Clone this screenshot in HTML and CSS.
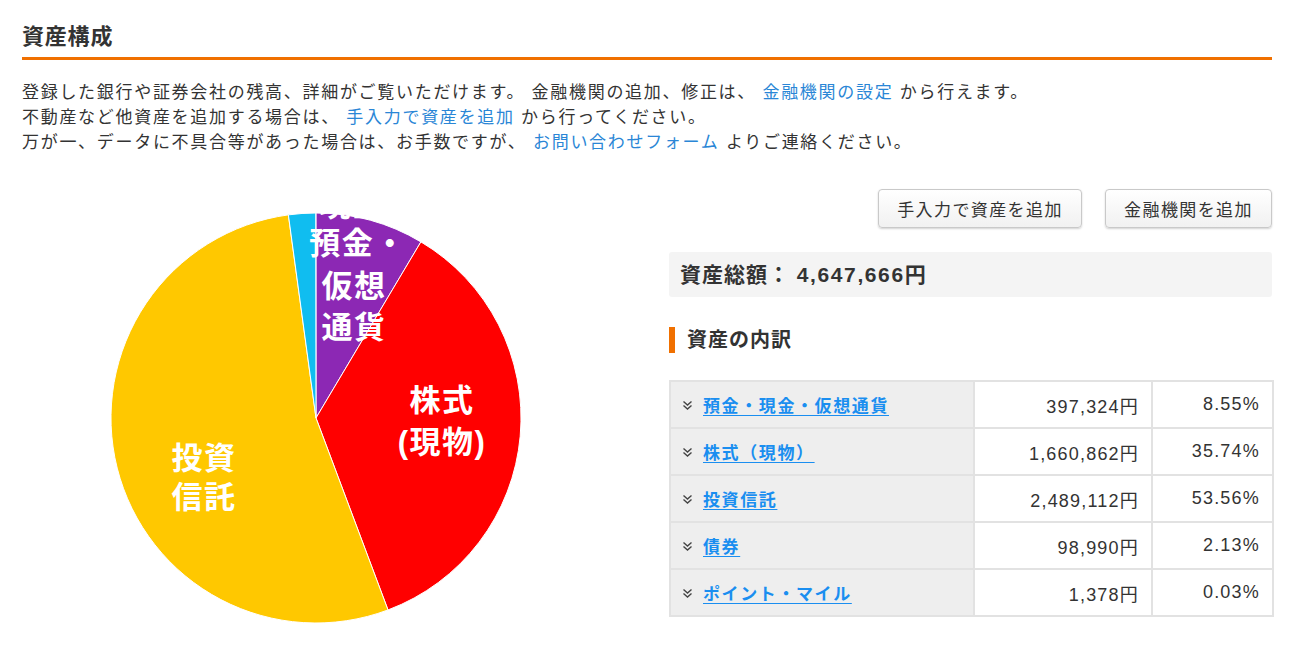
FILE: index.html
```html
<!DOCTYPE html>
<html lang="ja">
<head>
<meta charset="utf-8">
<title>資産構成</title>
<link rel="stylesheet" href="styles.css">
</head>
<body>
<div class="page">
  <h1 class="title">資産構成</h1>
  <div class="intro">
    <p>登録した銀行や証券会社の残高、詳細がご覧いただけます。 金融機関の追加、修正は、 <a href="#" class="plink">金融機関の設定</a> から行えます。</p>
    <p>不動産など他資産を追加する場合は、 <a href="#" class="plink">手入力で資産を追加</a> から行ってください。</p>
    <p>万が一、データに不具合等があった場合は、お手数ですが、 <a href="#" class="plink">お問い合わせフォーム</a> よりご連絡ください。</p>
  </div>

  <div class="main">
    <div class="chart-col">
      <svg class="pie" width="630" height="420" viewBox="0 0 630 420">
        <g stroke="#ffffff" stroke-width="1" stroke-linejoin="round">
          <path fill="#8c28b4" d="M294 206 L294 1 A205 205 0 0 1 398.92 29.88 Z"/>
          <path fill="#ff0000" d="M294 206 L398.92 29.88 A205 205 0 0 1 366 397.94 Z"/>
          <path fill="#ffc800" d="M294 206 L366 397.94 A205 205 0 1 1 266.39 2.87 Z"/>
          <path fill="#10bdf0" d="M294 206 L266.39 2.87 A205 205 0 0 1 293.75 1 Z"/>
        </g>
        <g class="pie-label" text-anchor="middle" dominant-baseline="central">
          <text x="330" y="-7">現金</text>
          <text x="336" y="31">預金・</text>
          <text x="332" y="74">仮想</text>
          <text x="332" y="115">通貨</text>
          <text x="420" y="188">株式</text>
          <text x="420" y="230">(現物)</text>
          <text x="182" y="246">投資</text>
          <text x="182" y="285">信託</text>
        </g>
      </svg>
    </div>

    <div class="side-col">
      <div class="buttons">
        <button class="btn">手入力で資産を追加</button>
        <button class="btn">金融機関を追加</button>
      </div>
      <div class="total">資産総額： <span class="total-num">4,647,666</span>円</div>
      <h2 class="subhead">資産の内訳</h2>
      <table class="breakdown">
        <colgroup>
          <col class="c1"><col class="c2"><col class="c3">
        </colgroup>
        <tbody>
          <tr>
            <td class="name"><span class="chev"><svg width="11" height="11" viewBox="0 0 11 11"><path d="M1.5 1.5 L5.5 5 L9.5 1.5 M1.5 5.5 L5.5 9 L9.5 5.5" fill="none" stroke="#444" stroke-width="1.4"/></svg></span><a href="#" class="tlink">預金・現金・仮想通貨</a></td>
            <td class="num">397,324円</td>
            <td class="num">8.55%</td>
          </tr>
          <tr>
            <td class="name"><span class="chev"><svg width="11" height="11" viewBox="0 0 11 11"><path d="M1.5 1.5 L5.5 5 L9.5 1.5 M1.5 5.5 L5.5 9 L9.5 5.5" fill="none" stroke="#444" stroke-width="1.4"/></svg></span><a href="#" class="tlink">株式（現物）</a></td>
            <td class="num">1,660,862円</td>
            <td class="num">35.74%</td>
          </tr>
          <tr>
            <td class="name"><span class="chev"><svg width="11" height="11" viewBox="0 0 11 11"><path d="M1.5 1.5 L5.5 5 L9.5 1.5 M1.5 5.5 L5.5 9 L9.5 5.5" fill="none" stroke="#444" stroke-width="1.4"/></svg></span><a href="#" class="tlink">投資信託</a></td>
            <td class="num">2,489,112円</td>
            <td class="num">53.56%</td>
          </tr>
          <tr>
            <td class="name"><span class="chev"><svg width="11" height="11" viewBox="0 0 11 11"><path d="M1.5 1.5 L5.5 5 L9.5 1.5 M1.5 5.5 L5.5 9 L9.5 5.5" fill="none" stroke="#444" stroke-width="1.4"/></svg></span><a href="#" class="tlink">債券</a></td>
            <td class="num">98,990円</td>
            <td class="num">2.13%</td>
          </tr>
          <tr>
            <td class="name"><span class="chev"><svg width="11" height="11" viewBox="0 0 11 11"><path d="M1.5 1.5 L5.5 5 L9.5 1.5 M1.5 5.5 L5.5 9 L9.5 5.5" fill="none" stroke="#444" stroke-width="1.4"/></svg></span><a href="#" class="tlink">ポイント・マイル</a></td>
            <td class="num">1,378円</td>
            <td class="num">0.03%</td>
          </tr>
        </tbody>
      </table>
    </div>
  </div>
</div>
</body>
</html>
```

FILE: styles.css
```css
html, body {
  margin: 0;
  padding: 0;
  background: #ffffff;
}

body {
  font-family: "Liberation Sans", "Noto Sans CJK JP", sans-serif;
  color: #333333;
}

.page {
  padding: 0 28px 0 22px;
}

.title {
  margin: 0;
  padding: 22px 0 5px;
  font-size: 22px;
  line-height: 30px;
  font-weight: bold;
  letter-spacing: 0.8px;
  color: #333333;
  border-bottom: 3px solid #f07000;
}

.intro {
  margin-top: 20px;
}

.intro p {
  margin: 0;
  font-size: 17px;
  line-height: 25px;
  letter-spacing: 1.7px;
  white-space: nowrap;
}

.plink {
  color: #2a86d6;
  text-decoration: none;
}

.main {
  display: flex;
  margin-top: 34px;
}

.chart-col {
  flex: 1;
  padding-top: 23px;
}

.pie {
  display: block;
  overflow: hidden;
}

.pie-label text {
  fill: #ffffff;
  font-family: "Liberation Sans", "Noto Sans CJK JP", sans-serif;
  font-size: 31px;
  font-weight: bold;
  letter-spacing: 1.5px;
}

.side-col {
  width: 603px;
  flex: none;
}

.buttons {
  display: flex;
  justify-content: flex-end;
  gap: 23px;
}

.btn {
  height: 39px;
  padding: 0 16px;
  font-family: "Liberation Sans", "Noto Sans CJK JP", sans-serif;
  font-size: 17px;
  letter-spacing: 1.4px;
  color: #333333;
  background: linear-gradient(#ffffff, #f1f1f1);
  border: 1px solid #c9c9c9;
  border-radius: 4px;
  box-shadow: 0 1px 2px rgba(0, 0, 0, 0.18);
}

.btn:first-child {
  width: 204px;
}

.btn:last-child {
  width: 167px;
}

.total {
  margin-top: 24px;
  height: 45px;
  line-height: 45px;
  padding-left: 11px;
  background: #f4f4f4;
  border-radius: 3px;
  font-size: 21px;
  font-weight: bold;
  letter-spacing: 1px;
  color: #333333;
}

.total-num {
  letter-spacing: 1.6px;
}

.subhead {
  margin: 30px 0 0;
  height: 26px;
  line-height: 26px;
  border-left: 6px solid #f07000;
  padding-left: 12px;
  font-size: 20px;
  font-weight: bold;
  letter-spacing: 1px;
  color: #333333;
}

.breakdown {
  margin-top: 27px;
  width: 603px;
  border-collapse: collapse;
  table-layout: fixed;
  border: 2px solid #dedede;
}

.c1 { width: 304px; }
.c2 { width: 178px; }
.c3 { width: 121px; }

.breakdown td {
  height: 45px;
  padding: 0;
  border: 2px solid #e2e2e2;
  font-size: 17px;
  letter-spacing: 1.3px;
  vertical-align: middle;
}

.breakdown td.name {
  background: #eeeeee;
  padding-left: 11px;
  white-space: nowrap;
  letter-spacing: 1.6px;
}

.chev {
  display: inline-block;
  width: 11px;
  height: 11px;
  margin-right: 10px;
  vertical-align: 1px;
}

.chev svg {
  display: block;
}

.tlink {
  color: #1a8ef0;
  font-weight: bold;
  text-decoration: underline;
  text-underline-offset: 3px;
}

.breakdown td.num {
  text-align: right;
  padding-right: 12px;
  background: #ffffff;
  color: #333333;
  font-size: 18px;
  letter-spacing: 1.2px;
}
```
